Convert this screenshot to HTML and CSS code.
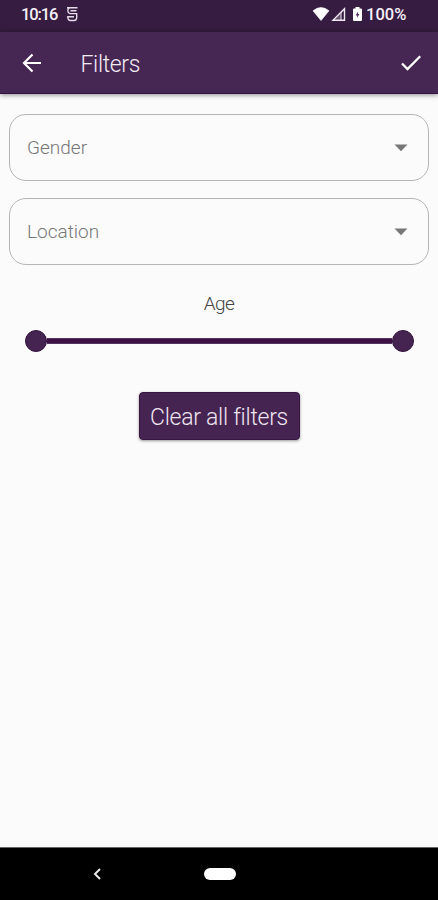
FILE: index.html
```html
<!DOCTYPE html>
<html lang="en">
<head>
<meta charset="utf-8">
<title>Filters</title>
<link rel="stylesheet" href="styles.css">
</head>
<body>
<div class="screen">
  <div class="status">
    <span class="time">10:16</span>
    <svg class="notif" width="13" height="16" viewBox="0 0 13 16" fill="none" stroke="#e6dce9" stroke-width="1.400"><path d="M1 1.800H11.500M10.500 4.700H4.500M3.500 1.800Q1.800 2.500 1.800 4.700T4 7.600H10.700V11.500Q10.700 14.500 8 14.500H4.500Q1.800 14.500 1.800 10.800H8"/></svg>
    <span class="spacer"></span>
    <svg class="wifi" width="18" height="16" viewBox="0 0 18 16"><path d="M1 4.800Q9-1.800 17 4.800L9 14.500z" fill="#fff" stroke="#fff" stroke-width=".600" stroke-linejoin="round"/></svg>
    <svg class="signal" width="15" height="15" viewBox="0 0 15 15"><path d="M13.500 1.800v11.500H2z" fill="none" stroke="#f1eaf3" stroke-width="1.400"/><path d="M9.500 6v7H2.500z" fill="#cfc2d4" opacity=".35"/><path d="M10 5v8.500" stroke="#f1eaf3" stroke-width="1"/></svg>
    <svg class="battery" width="11" height="16" viewBox="0 0 11 16"><path d="M3.500 1h4v1.500H9q1 0 1 1V14q0 1-1 1H2q-1 0-1-1V3.500q0-1 1-1h1.500z" fill="#fff"/><path d="M6 5.500L3.700 9.500h1.500V12l2.200-4H6z" fill="#502e58"/></svg>
    <span class="percent">100%</span>
  </div>
  <header class="appbar">
    <svg class="back" width="20" height="20" viewBox="0 0 20 20" fill="none" stroke="#fff" stroke-width="2.200"><path d="M19 10H2.500M10.500 1.500L2 10l8.500 8.500"/></svg>
    <h1>Filters</h1>
    <svg class="check" width="22" height="18" viewBox="0 0 22 18" fill="none" stroke="#fff" stroke-width="2.300"><path d="M2 9.500l5.500 5.500L20.200 2.300"/></svg>
  </header>
  <main>
    <div class="field"><span class="gender">Gender</span><svg width="14" height="8" viewBox="0 0 14 8"><path d="M.500.500h13L7 7.200z" fill="#777"/></svg></div>
    <div class="field"><span class="location">Location</span><svg width="14" height="8" viewBox="0 0 14 8"><path d="M.500.500h13L7 7.200z" fill="#777"/></svg></div>
    <div class="age">Age</div>
    <div class="slider"><i class="thumb"></i><i class="track"></i><i class="thumb"></i></div>
    <button class="clear"><span>Clear all filters</span></button>
  </main>
  <nav>
    <svg class="nav-back" width="10" height="14" viewBox="0 0 10 14" fill="none" stroke="#e8e8e8" stroke-width="2"><path d="M8 2L3 7l5 5"/></svg>
    <span class="home"></span>
  </nav>
</div>
</body>
</html>
```
FILE: styles.css
```css
* { box-sizing: border-box; }
body { margin: 0; font-family: Roboto, sans-serif; background: #fbfbfb; }
svg { display: block; flex: none; }
.screen { height: 900px; display: flex; flex-direction: column; overflow: hidden; }
.status { height: 32px; flex: none; background: #351c40; display: flex; align-items: center; padding: 0 31px 4px 21px; color: #f6f0f8; font: 500 16.5px/28px Roboto, sans-serif; }
.time { width: 45px; padding-top: 1px; letter-spacing: -1.1px; }
.spacer { flex: 1; }
.signal { margin: 0 6px 0 1px; }
.battery { margin-right: 3px; }
.percent { width: 41px; padding-top: 1px; white-space: nowrap; }
.appbar { height: 62px; flex: none; background: #462653; border-bottom: 1px solid #31123c; display: flex; align-items: center; padding: 0 16px 0 22px; box-shadow: 0 1px 5px rgba(0,0,0,.45); }
h1 { margin: 4px 0 0 38.5px; font-size: 23px; line-height: 28px; font-weight: 300; letter-spacing: -.35px; color: #f2ebf4; flex: 1; }
.back { margin-top: 1px; }
.check { margin-top: 1px; }
main { flex: 1; display: flex; flex-direction: column; padding: 20px 9px 0; }
.field { height: 67px; margin-bottom: 17px; border: 1.5px solid #b5b5b5; border-radius: 17px; display: flex; align-items: center; justify-content: space-between; padding: 0 20px 0 17px; font-size: 19px; font-weight: 300; color: #777; }
.age { margin-top: 10px; text-align: center; font-size: 19px; line-height: 24px; font-weight: 300; letter-spacing: -.6px; color: #444; }
.slider { display: flex; align-items: center; height: 22px; margin: 14px 15px 0 16px; }
.thumb { width: 22px; height: 22px; border: 1px solid #32103c; border-radius: 50%; background: #462452; }
.track { flex: 1; height: 6px; background: #3b1146; border: solid #573460; border-width: 1px 0; }
.clear { align-self: center; margin: 40px 0 0; width: 161px; height: 48px; border: 1px solid #351641; border-radius: 4px; padding: 3px 0 0; background: #462452; color: #eee5f0; font: 300 23px/28px Roboto, sans-serif; letter-spacing: -.27px; white-space: nowrap; box-shadow: 0 1px 3px rgba(0,0,0,.4); }
nav { height: 53px; flex: none; background: #000; border-top: 1px solid #666; display: flex; align-items: center; padding-left: 92px; }
.home { width: 32px; height: 12px; border-radius: 6px; background: #fff; margin-left: 102px; }
```
